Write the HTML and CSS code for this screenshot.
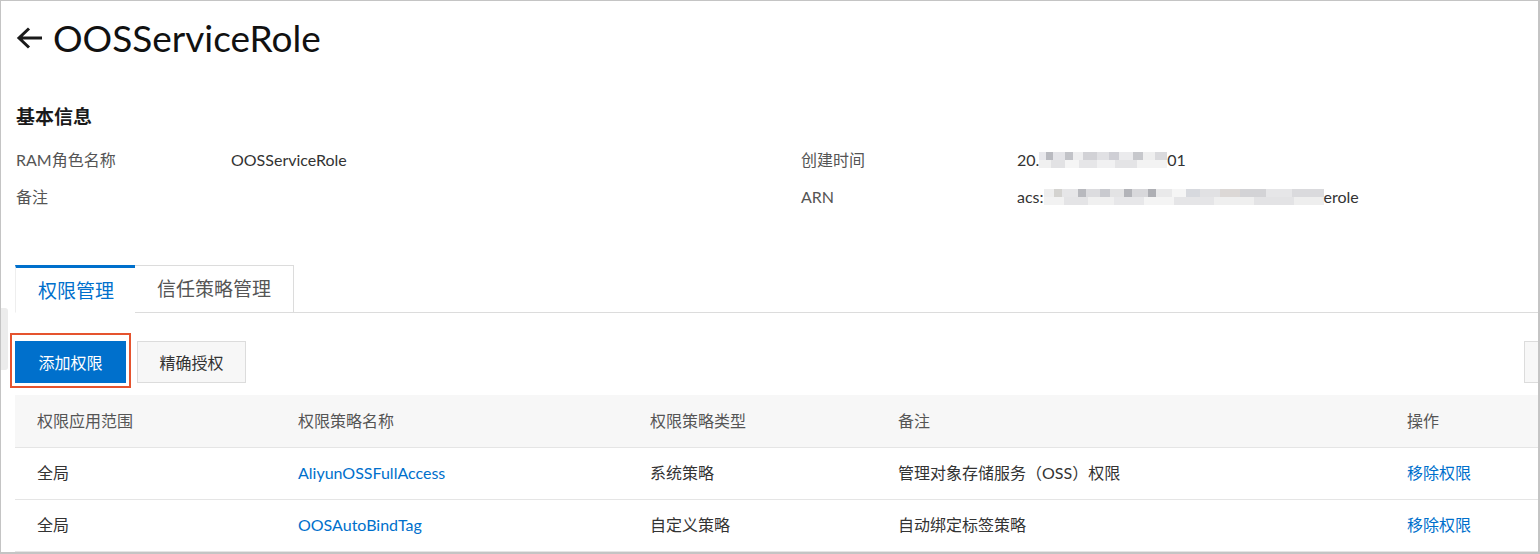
FILE: index.html
```html
<!DOCTYPE html>
<html lang="zh-CN">
<head>
<meta charset="utf-8">
<title>OOSServiceRole</title>
<link rel="stylesheet" href="styles.css">
</head>
<body>
<div class="frame">
  <div class="side-handle"></div>
  <div class="page">
    <h1 class="title">
      <svg class="back" width="28" height="24" viewBox="0 0 28 24"><path d="M3 12 H26 M13 2.5 L3 12 L13 21.5" fill="none" stroke="#1a1a1a" stroke-width="3" stroke-linejoin="miter"/></svg>
      <span>OOSServiceRole</span>
    </h1>

    <h2 class="section-title">基本信息</h2>
    <div class="info">
      <div class="info-label">RAM角色名称</div>
      <div class="info-value">OOSServiceRole</div>
      <div class="info-label">创建时间</div>
      <div class="info-value">20.<span class="blur blur-date"></span>01</div>
      <div class="info-label">备注</div>
      <div class="info-value"></div>
      <div class="info-label">ARN</div>
      <div class="info-value">acs:<span class="blur blur-arn"></span>erole</div>
    </div>

    <div class="tabs">
      <div class="tab active">权限管理</div>
      <div class="tab">信任策略管理</div>
      <div class="tab-fill"></div>
    </div>

    <div class="toolbar">
      <button class="btn btn-primary">添加权限<span class="highlight"></span></button>
      <button class="btn btn-default">精确授权</button>
      <button class="btn btn-edge"></button>
    </div>

    <div class="table">
      <div class="tr th">
        <div class="c1">权限应用范围</div>
        <div class="c2">权限策略名称</div>
        <div class="c3">权限策略类型</div>
        <div class="c4">备注</div>
        <div class="c5">操作</div>
      </div>
      <div class="tr">
        <div class="c1">全局</div>
        <div class="c2"><a class="link">AliyunOSSFullAccess</a></div>
        <div class="c3">系统策略</div>
        <div class="c4">管理对象存储服务（OSS）权限</div>
        <div class="c5"><a class="link">移除权限</a></div>
      </div>
      <div class="tr">
        <div class="c1">全局</div>
        <div class="c2"><a class="link">OOSAutoBindTag</a></div>
        <div class="c3">自定义策略</div>
        <div class="c4">自动绑定标签策略</div>
        <div class="c5"><a class="link">移除权限</a></div>
      </div>
    </div>
  </div>
</div>
</body>
</html>
```

FILE: styles.css
```css
html, body {
  margin: 0;
  padding: 0;
  background: #fff;
}
body {
  font-family: Lato, "Noto Sans CJK SC", sans-serif;
  color: #333;
}
.frame {
  position: relative;
  width: 1540px;
  height: 554px;
  box-sizing: border-box;
  border-style: solid;
  border-color: #c4c4c4;
  border-width: 1px 2px 2px 1px;
  overflow: hidden;
}
.side-handle {
  position: absolute;
  left: 0;
  top: 307px;
  width: 7px;
  height: 62px;
  background: #ececec;
  border-radius: 0 3px 3px 0;
}
.page {
  padding: 12px 0 0 14px;
}
.title {
  display: flex;
  align-items: center;
  margin: 0;
  height: 48px;
  font-size: 37px;
  font-weight: 400;
  color: #111;
}
.back {
  margin: 2px 9px 0 1px;
}
.section-title {
  margin: 43px 0 0 1px;
  font-size: 19px;
  line-height: 26px;
  font-weight: 700;
  color: #1a1a1a;
}
.info {
  display: grid;
  grid-template-columns: 215px 570px 216px 1fr;
  margin: 12px 0 0 1px;
  font-size: 16px;
}
.info > div {
  height: 35px;
  line-height: 35px;
  padding-bottom: 2px;
  white-space: nowrap;
}
.info-label {
  color: #555;
}
.info-value {
  color: #333;
}
.blur {
  display: inline-block;
  height: 16px;
  vertical-align: -2px;
}
.blur-date {
  width: 128px;
  background:
    linear-gradient(90deg, #e8e8ec 0 7px, #b9bac0 7px 14px, #e4e4e8 14px 26px, #c2c3c8 26px 34px, #eeeeef 34px 44px, #d2d2d6 44px 58px, #e1e1e4 58px 70px, #cfcfd5 70px 80px, #ebebed 80px 94px, #c7c8cc 94px 104px, #efefef 104px 116px, #dadadd 116px 128px) top / 100% 8px no-repeat,
    linear-gradient(90deg, #f0f0f0 0 12px, #e2e2e4 12px 26px, #f5f5f5 26px 40px, #e6e6e8 40px 58px, #f1f1f2 58px 76px, #e4e4e6 76px 98px, #f3f3f3 98px 128px) bottom / 100% 8px no-repeat;
}
.blur-arn {
  width: 280px;
  background:
    linear-gradient(90deg, #eeeeee 0 10px, #d4d3d0 10px 18px, #e6e6e8 18px 34px, #b8b9be 34px 42px, #dcdcdf 42px 56px, #c9cacf 56px 66px, #e3e3e4 66px 80px, #b3b4b9 80px 88px, #d8d8db 88px 104px, #aeafb4 104px 112px, #e9e9ea 112px 128px, #f5f5f5 128px 142px, #d7d9de 142px 156px, #e1e1e3 156px 176px, #dcd8d6 176px 196px, #d3d3d6 196px 222px, #e6e6e8 222px 248px, #dadadd 248px 280px) top / 100% 8px no-repeat,
    linear-gradient(90deg, #f2f2f2 0 20px, #e4e4e6 20px 44px, #f0f0f0 44px 70px, #e7e7e9 70px 100px, #f4f4f4 100px 130px, #e5e5e7 130px 170px, #efefef 170px 210px, #e3e3e5 210px 250px, #eeeeee 250px 280px) bottom / 100% 8px no-repeat;
}
.tabs {
  display: flex;
  margin-top: 49px;
  height: 48px;
}
.tab {
  box-sizing: border-box;
  height: 48px;
  padding: 0 22px;
  font-size: 19px;
  line-height: 46px;
  color: #555;
  white-space: nowrap;
  border: 1px solid #dcdcdc;
  border-left: none;
  background: #fff;
}
.tab.active {
  width: 120px;
  color: #0070cc;
  border: none;
  border-top: 3px solid #0070cc;
  border-left: 1px solid #eeeeee;
  line-height: 45px;
  border-bottom: 1px solid #fff;
}
.tab-fill {
  flex: 1;
  border-bottom: 1px solid #dcdcdc;
}
.toolbar {
  display: flex;
  gap: 11px;
  margin-top: 28px;
  height: 42px;
}
.btn {
  position: relative;
  box-sizing: border-box;
  height: 42px;
  padding: 0;
  font-family: inherit;
  font-size: 16px;
  white-space: nowrap;
  color: #333;
  background: #f7f7f7;
  border: 1px solid #dcdcdc;
  border-radius: 0;
  cursor: pointer;
}
.btn-primary {
  width: 111px;
  background: #0070cc;
  border-color: #0070cc;
  color: #fff;
}
.btn-default {
  width: 109px;
}
.btn-edge {
  margin-left: auto;
  margin-right: -30px;
  width: 44px;
}
.highlight {
  position: absolute;
  left: -6px;
  top: -9px;
  right: -6px;
  bottom: -6px;
  border: 2px solid #e5532e;
  pointer-events: none;
}
.table {
  margin-top: 12px;
  font-size: 16px;
}
.tr {
  display: flex;
  height: 51px;
  align-items: center;
  border-bottom: 1px solid #e5e5e5;
}
.tr.th {
  height: 52px;
  background: #f7f7f7;
  color: #555;
}
.tr > div {
  box-sizing: border-box;
  padding-left: 22px;
  padding-bottom: 3px;
  flex: none;
  white-space: nowrap;
}
.tr.th > div {
  padding-bottom: 2px;
}
.c1 { width: 261px; }
.c2 { width: 352px; }
.c3 { width: 248px; }
.c4 { width: 509px; }
.c5 { flex: 1 !important; }
.link {
  color: #0070cc;
  text-decoration: none;
  cursor: pointer;
}
```
